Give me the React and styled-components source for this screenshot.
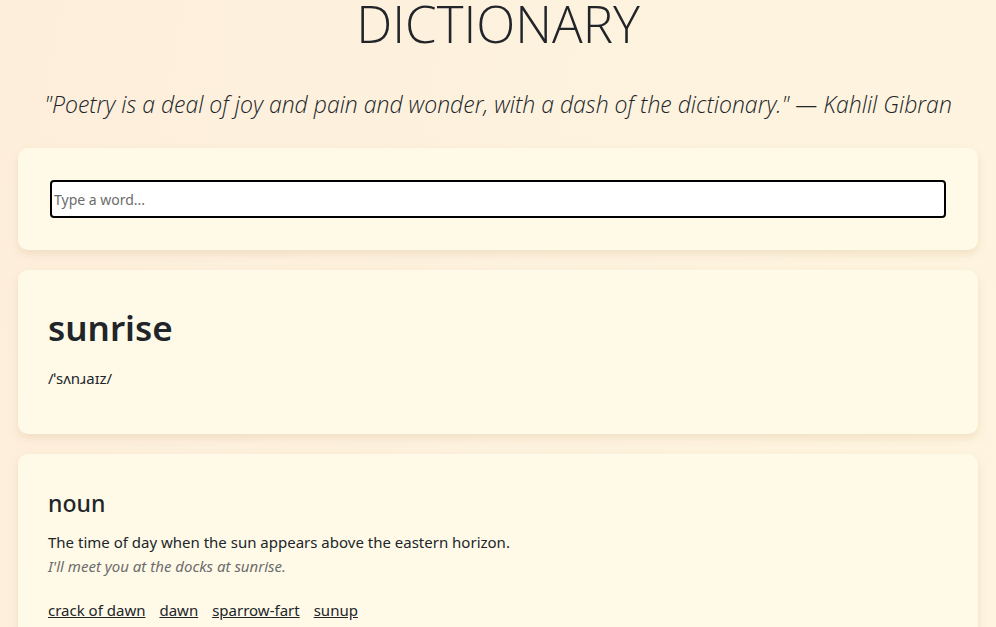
import React from 'react';
import styled, { createGlobalStyle } from 'styled-components';

const GlobalStyle = createGlobalStyle`
  html, body {
    margin: 0;
    padding: 0;
  }
  body {
    background: linear-gradient(100deg, #fdeedb 0%, #fdf2de 50%, #fef4df 100%);
    min-height: 100vh;
    color: #212529;
    font-family: 'Open Sans', 'Noto Sans', sans-serif;
  }
  * { box-sizing: border-box; }
`;

const Page = styled.div`
  width: 960px;
  margin: 0 auto;
  display: flex;
  flex-direction: column;
  gap: 20px;
  padding-bottom: 40px;
`;

const Header = styled.header`
  display: flex;
  flex-direction: column;
  align-items: center;
`;

const Title = styled.h1`
  margin: 0;
  font-family: 'Open Sans', sans-serif;
  font-weight: 300;
  font-size: 51px;
  line-height: 47px;
  color: #212529;
`;

const Quote = styled.p`
  margin: 41px 0 8px;
  font-family: 'Open Sans', sans-serif;
  font-weight: 300;
  font-style: italic;
  font-size: 23px;
  line-height: 32px;
  color: #212529;
  white-space: nowrap;
`;

const Card = styled.section`
  background: #fffae8;
  border-radius: 10px;
  box-shadow: 0 4px 8px rgba(200, 160, 110, 0.22);
  padding: ${(p) => p.$pad || '32px 30px'};
`;

const SearchInput = styled.input`
  display: block;
  width: 100%;
  height: 38px;
  border: 2px solid #000;
  border-radius: 4px;
  background: #fff;
  padding: 0 2px;
  font-family: 'Noto Sans', sans-serif;
  font-size: 14px;
  color: #212529;
  outline: none;
  &::placeholder {
    color: #6c6c6c;
  }
`;

const Word = styled.h2`
  margin: 0;
  font-family: 'Noto Sans', sans-serif;
  font-weight: 600;
  font-size: 35px;
  line-height: 44px;
  color: #212529;
`;

const Phonetic = styled.div`
  margin-top: 17px;
  font-family: 'Noto Sans', sans-serif;
  font-size: 15px;
  line-height: 22px;
`;

const PartOfSpeech = styled.h3`
  margin: 0;
  font-family: 'Noto Sans', sans-serif;
  font-weight: 500;
  font-size: 23px;
  line-height: 30px;
`;

const Definition = styled.div`
  margin-top: 12px;
  font-family: 'Noto Sans', sans-serif;
  font-size: 15px;
  line-height: 24px;
`;

const Example = styled.div`
  font-family: 'Noto Sans', sans-serif;
  font-style: italic;
  font-size: 15px;
  line-height: 24px;
  color: #6c6c6c;
`;

const Synonyms = styled.div`
  margin-top: 20px;
  display: flex;
  gap: 14px;
`;

const Synonym = styled.a`
  font-family: 'Noto Sans', sans-serif;
  font-size: 15px;
  line-height: 24px;
  color: #212529;
  text-decoration: underline;
`;

const synonyms = ['crack of dawn', 'dawn', 'sparrow-fart', 'sunup'];

export default function App() {
  return (
    <>
      <GlobalStyle />
      <Page>
        <Header>
          <Title>DICTIONARY</Title>
          <Quote>
            "Poetry is a deal of joy and pain and wonder, with a dash of the dictionary." — Kahlil Gibran
          </Quote>
        </Header>
        <Card $pad="32px 32px">
          <SearchInput placeholder="Type a word..." />
        </Card>
        <Card $pad="36px 30px 45px">
          <Word>sunrise</Word>
          <Phonetic>/ˈsʌnɹaɪz/</Phonetic>
        </Card>
        <Card $pad="34px 30px">
          <PartOfSpeech>noun</PartOfSpeech>
          <Definition>The time of day when the sun appears above the eastern horizon.</Definition>
          <Example>I'll meet you at the docks at sunrise.</Example>
          <Synonyms>
            {synonyms.map((s) => (
              <Synonym key={s} href="#">{s}</Synonym>
            ))}
          </Synonyms>
        </Card>
      </Page>
    </>
  );
}
